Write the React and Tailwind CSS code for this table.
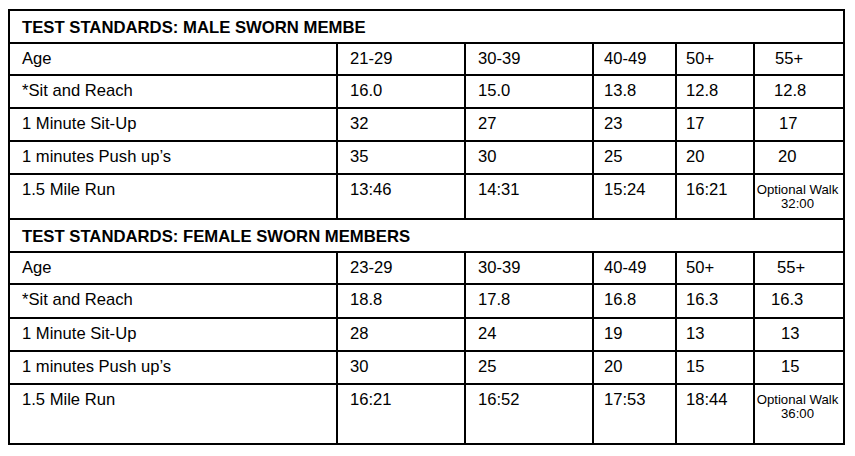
import { Fragment } from 'react'

const tables = [
  {
    title: 'TEST STANDARDS: MALE SWORN MEMBE',
    heights: ['h-[32px]', 'h-[33px]', 'h-[33px]', 'h-[33px]', 'h-[45px]'],
    rows: [
      ['Age', '21-29', '30-39', '40-49', '50+', { text: '55+', pad: 'pl-[20px]' }],
      ['*Sit and Reach', '16.0', '15.0', '13.8', '12.8', { text: '12.8', pad: 'pl-[19px]' }],
      ['1 Minute Sit-Up', '32', '27', '23', '17', { text: '17', pad: 'pl-[24px]' }],
      ['1 minutes Push up’s', '35', '30', '25', '20', { text: '20', pad: 'pl-[23px]' }],
      ['1.5 Mile Run', '13:46', '14:31', '15:24', '16:21', { walk: '32:00' }],
    ],
  },
  {
    title: 'TEST STANDARDS: FEMALE SWORN MEMBERS',
    heights: ['h-[32px]', 'h-[34px]', 'h-[33px]', 'h-[33px]', 'h-[60px]'],
    rows: [
      ['Age', '23-29', '30-39', '40-49', '50+', { text: '55+', pad: 'pl-[22px]' }],
      ['*Sit and Reach', '18.8', '17.8', '16.8', '16.3', { text: '16.3', pad: 'pl-[16px]' }],
      ['1 Minute Sit-Up', '28', '24', '19', '13', { text: '13', pad: 'pl-[26px]' }],
      ['1 minutes Push up’s', '30', '25', '20', '15', { text: '15', pad: 'pl-[26px]' }],
      ['1.5 Mile Run', '16:21', '16:52', '17:53', '18:44', { walk: '36:00' }],
    ],
  },
]

const colPad = ['pl-[12px]', 'pl-[12px]', 'pl-[12px]', 'pl-[10px]', 'pl-[9px]']

export default function App() {
  return (
    <div className="w-[855px] h-[456px] bg-white pt-[9px] pl-[8px] font-['Liberation_Sans',Arial,sans-serif] text-black">
      <div className="grid w-fit grid-cols-[328px_128px_128px_83px_78px_90px] border-l-2 border-t-2 border-black">
        {tables.map((t) => (
          <Fragment key={t.title}>
            {/* Section title */}
            <div className="col-span-6 h-[33px] border-r-2 border-b-2 border-black pl-[12px] pt-[7px] text-[16.7px] leading-[19px] font-bold whitespace-nowrap">
              {t.title}
            </div>

            {t.rows.map((row, r) =>
              row.map((cell, c) => {
                const base = `${t.heights[r]} border-r-2 border-b-2 border-black whitespace-nowrap`
                if (typeof cell === 'string') {
                  return (
                    <div key={`${r}-${c}`} className={`${base} ${colPad[c]} pt-[5px] text-[16.6px] leading-[19px]`}>
                      {cell}
                    </div>
                  )
                }
                if (cell.walk) {
                  return (
                    <div key={`${r}-${c}`} className={`${base} pt-[8px] pr-[3px] text-center text-[13.2px] leading-[14px]`}>
                      <div>Optional Walk</div>
                      <div>{cell.walk}</div>
                    </div>
                  )
                }
                return (
                  <div key={`${r}-${c}`} className={`${base} ${cell.pad} pt-[5px] text-[16.6px] leading-[19px]`}>
                    {cell.text}
                  </div>
                )
              })
            )}
          </Fragment>
        ))}
      </div>
    </div>
  )
}
